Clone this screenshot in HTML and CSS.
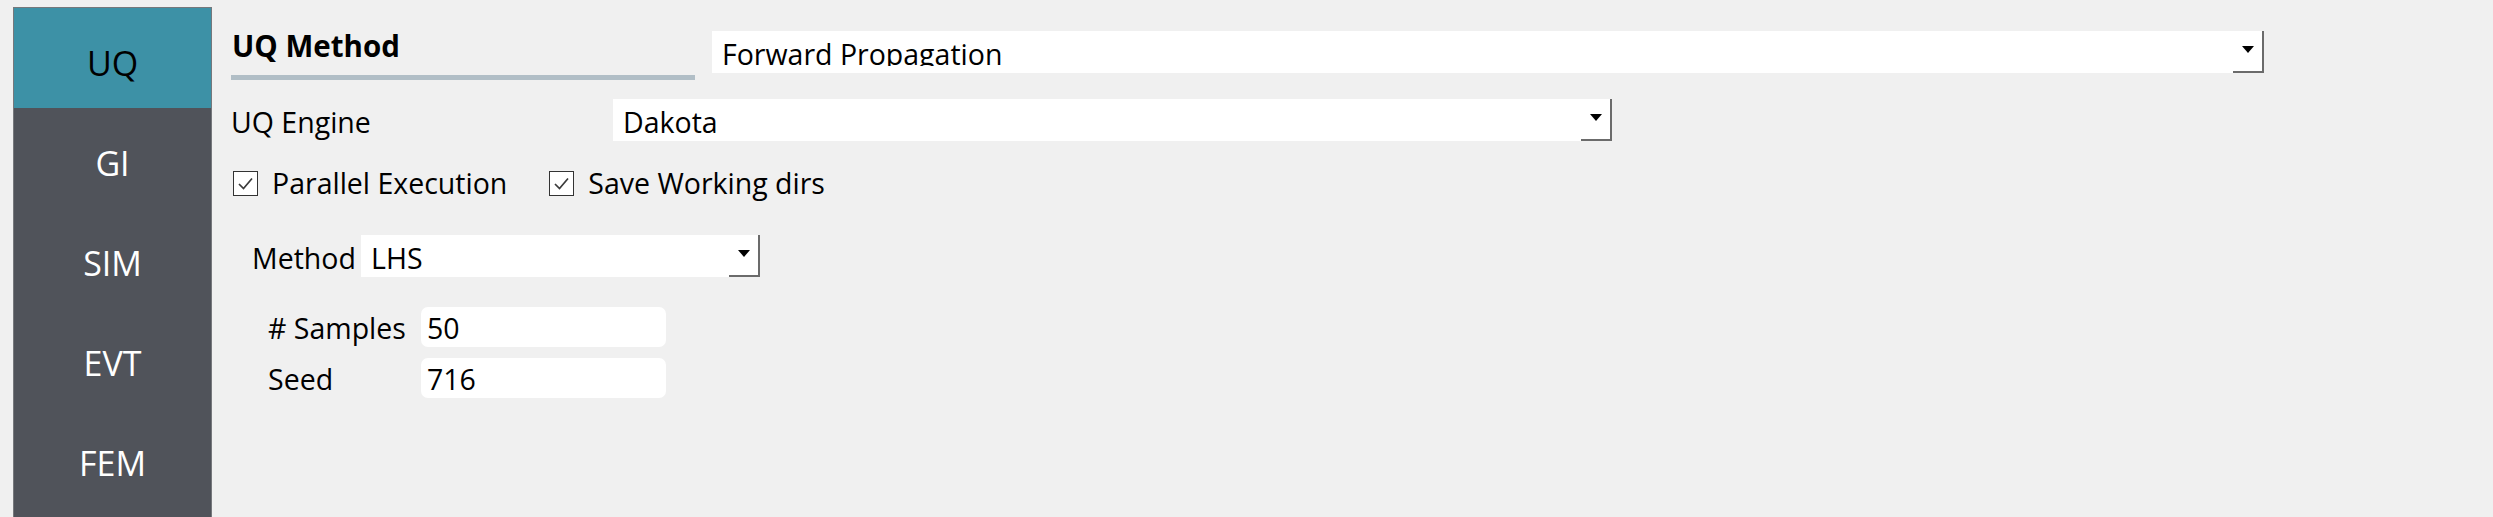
FILE: index.html
```html
<!DOCTYPE html>
<html lang="en">
<head>
<meta charset="utf-8">
<title>UQ</title>
<link rel="stylesheet" href="styles.css">
</head>
<body>
<div class="app">
  <nav class="sidebar">
    <div class="tab active">UQ</div>
    <div class="tab">GI</div>
    <div class="tab">SIM</div>
    <div class="tab">EVT</div>
    <div class="tab">FEM</div>
  </nav>
  <main class="content">
    <div class="header-row">
      <div class="title-block">
        <div class="title">UQ Method</div>
        <div class="title-bar"></div>
      </div>
      <div class="combo combo-wide">
        <span class="combo-text clip">Forward Propagation</span>
        <span class="combo-btn"><i class="arrow"></i></span>
      </div>
    </div>
    <div class="engine-row">
      <span class="label engine-label">UQ Engine</span>
      <div class="combo combo-engine">
        <span class="combo-text">Dakota</span>
        <span class="combo-btn"><i class="arrow"></i></span>
      </div>
    </div>
    <div class="check-row">
      <label class="check">
        <span class="cb"><svg viewBox="0 0 23 23" width="23" height="23"><path d="M5 12 L9.5 16.5 L18 6.5" fill="none" stroke="#3a3a3a" stroke-width="1.7"/></svg></span>
        <span class="check-text">Parallel Execution</span>
      </label>
      <label class="check">
        <span class="cb"><svg viewBox="0 0 23 23" width="23" height="23"><path d="M5 12 L9.5 16.5 L18 6.5" fill="none" stroke="#3a3a3a" stroke-width="1.7"/></svg></span>
        <span class="check-text">Save Working dirs</span>
      </label>
    </div>
    <div class="method-row">
      <span class="label method-label">Method</span>
      <div class="combo combo-method">
        <span class="combo-text">LHS</span>
        <span class="combo-btn"><i class="arrow"></i></span>
      </div>
    </div>
    <div class="fields">
      <span class="field-label"># Samples</span>
      <span class="field-input">50</span>
      <span class="field-label">Seed</span>
      <span class="field-input">716</span>
    </div>
  </main>
</div>
</body>
</html>
```
FILE: styles.css
```css
html, body {
  margin: 0;
  padding: 0;
}
body {
  background: #f0f0f0;
  font-family: "Open Sans", "Noto Sans", sans-serif;
  font-size: 28.5px;
  color: #000;
}
.app {
  display: flex;
  height: 517px;
  overflow: hidden;
}
.sidebar {
  flex: none;
  margin-left: 13px;
  margin-top: 7px;
  width: 197px;
  border: 1px solid #76787c;
  border-bottom: none;
  background: #50535a;
}
.tab {
  height: 100px;
  box-sizing: border-box;
  padding-top: 38px;
  text-align: center;
  font-size: 34px;
  line-height: 34px;
  color: #fff;
}
.tab.active {
  background: #3d91a6;
  color: #000;
}
.content {
  flex: 1;
  padding-left: 19px;
}
.header-row {
  display: flex;
  gap: 17px;
  margin-top: 31px;
  height: 49px;
}
.title-block {
  width: 464px;
  padding-top: 1px;
}
.title {
  font-weight: 700;
  font-size: 29.5px;
  line-height: 28px;
  padding-left: 1px;
}
.title-bar {
  height: 5px;
  margin-top: 15px;
  background: #b1bec6;
}
.combo {
  display: flex;
  height: 42px;
  background: #fff;
}
.combo-wide { width: 1552px; }
.combo-engine { width: 999px; }
.combo-method { width: 399px; }
.combo-text {
  flex: 1;
  padding-left: 10px;
  padding-top: 4px;
  line-height: 38px;
  white-space: nowrap;
  overflow: hidden;
}
.combo-text.clip {
  align-self: flex-start;
  height: 31px;
}
.combo-btn {
  flex: none;
  width: 29px;
  border-right: 2px solid #6b6b6b;
  border-bottom: 2px solid #6b6b6b;
  display: flex;
  align-items: center;
  justify-content: center;
}
.arrow {
  width: 0;
  height: 0;
  border-left: 6.5px solid transparent;
  border-right: 6.5px solid transparent;
  border-top: 7px solid #000;
  margin-bottom: 3px;
}
.label {
  padding-top: 4px;
  line-height: 38px;
  white-space: nowrap;
}
.engine-row {
  display: flex;
  margin-top: 19px;
}
.engine-label {
  width: 382px;
}
.check-row {
  display: flex;
  align-items: center;
  gap: 42px;
  margin-top: 23px;
  height: 38px;
  padding-left: 2px;
}
.check {
  display: flex;
  align-items: center;
  gap: 14px;
}
.cb {
  width: 23px;
  height: 23px;
  border: 1px solid #333;
  background: #fff;
  display: block;
}
.cb svg { display: block; }
.check-text {
  line-height: 38px;
  white-space: nowrap;
}
.method-row {
  display: flex;
  margin-top: 33px;
  padding-left: 21px;
}
.method-label {
  width: 109px;
}
.fields {
  display: grid;
  grid-template-columns: 153px 245px;
  grid-auto-rows: 40px;
  row-gap: 11px;
  margin-top: 30px;
  padding-left: 37px;
}
.field-label {
  padding-top: 2px;
  line-height: 38px;
  white-space: nowrap;
}
.field-input {
  background: #fff;
  border-radius: 7px;
  padding-left: 6px;
  padding-top: 2px;
  line-height: 38px;
}
```
